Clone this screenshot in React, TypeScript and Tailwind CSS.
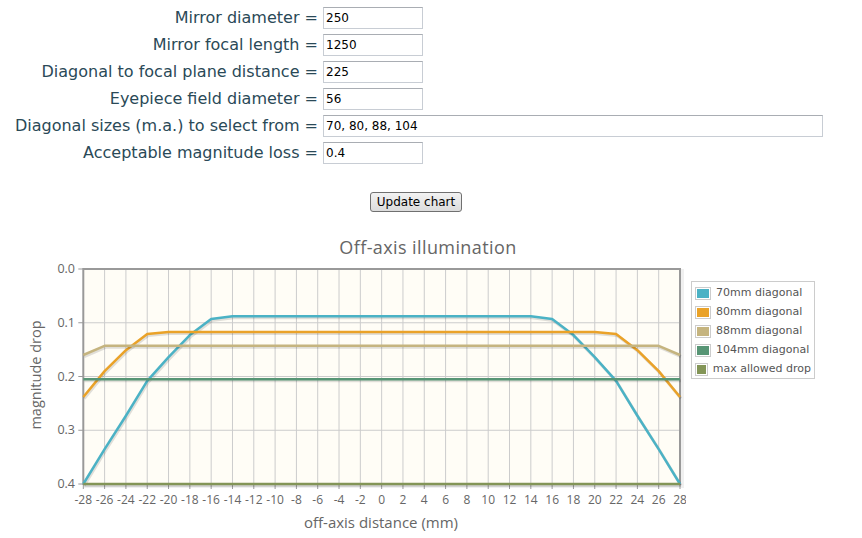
import React from 'react';

const fields = [
  { label: 'Mirror diameter', value: '250', wide: false },
  { label: 'Mirror focal length', value: '1250', wide: false },
  { label: 'Diagonal to focal plane distance', value: '225', wide: false },
  { label: 'Eyepiece field diameter', value: '56', wide: false },
  { label: 'Diagonal sizes (m.a.) to select from', value: '70, 80, 88, 104', wide: true },
  { label: 'Acceptable magnitude loss', value: '0.4', wide: false },
];

// x positions -28..28 step 2
const xs = Array.from({ length: 29 }, (_, i) => -28 + i * 2);

const flat = (v: number) => xs.map(() => v);
const mirror = (edge: number[], mid: number) => {
  // edge = values from -28 inward
  const out = xs.map(() => mid);
  edge.forEach((v, i) => {
    out[i] = v;
    out[28 - i] = v;
  });
  return out;
};

const series = [
  { name: '70mm diagonal', color: '#4bb2c5', data: mirror([0.4, 0.335, 0.273, 0.208, 0.164, 0.123, 0.093], 0.088) },
  { name: '80mm diagonal', color: '#eaa228', data: mirror([0.238, 0.19, 0.151, 0.121], 0.117) },
  { name: '88mm diagonal', color: '#c5b47f', data: mirror([0.16], 0.143) },
  { name: '104mm diagonal', color: '#579575', data: flat(0.205) },
  { name: 'max allowed drop', color: '#839557', data: flat(0.4) },
];

// plot box in svg coords
const L = 83.3;
const R = 680;
const T = 11;
const B = 226;
const px = (x: number) => L + ((x + 28) / 56) * (R - L);
const py = (y: number) => T + (y / 0.4) * (B - T);

const Chart: React.FC = () => {
  return (
    <svg width={686} height={279} className="block shrink-0">
      {/* grid shadow */}
      <rect x={L + 2} y={T + 2} width={R - L} height={B - T} fill="none" stroke="rgba(0,0,0,0.06)" strokeWidth={4} />
      <rect x={L} y={T} width={R - L} height={B - T} fill="#fffdf6" />
      {xs.slice(1, -1).map((x) => (
        <line key={x} x1={px(x)} x2={px(x)} y1={T} y2={B} stroke="#cccccc" strokeWidth={1} />
      ))}
      {[0.1, 0.2, 0.3].map((y) => (
        <line key={y} x1={L} x2={R} y1={py(y)} y2={py(y)} stroke="#cccccc" strokeWidth={1} />
      ))}
      <rect x={L} y={T} width={R - L} height={B - T} fill="none" stroke="#999999" strokeWidth={2} />

      {/* ticks */}
      {xs.map((x) => (
        <g key={x}>
          <line x1={px(x)} x2={px(x)} y1={B} y2={B + 5} stroke="#999999" strokeWidth={1} />
          <text x={px(x)} y={246} textAnchor="middle" fontSize={12} fill="#666666">
            {x}
          </text>
        </g>
      ))}
      {[0, 0.1, 0.2, 0.3, 0.4].map((y) => (
        <g key={y}>
          <line x1={L - 5} x2={L} y1={py(y)} y2={py(y)} stroke="#999999" strokeWidth={1} />
          <text x={75} y={py(y) + 4} textAnchor="end" fontSize={12.5} fill="#666666">
            {y.toFixed(1)}
          </text>
        </g>
      ))}

      {/* series */}
      {series.map((s) => {
        const pts = s.data.map((v, i) => `${px(xs[i])},${py(v)}`).join(' ');
        const sh = s.data.map((v, i) => `${px(xs[i]) + 1},${py(v) + 1.5}`).join(' ');
        return (
          <g key={s.name}>
            <polyline points={sh} fill="none" stroke="rgba(0,0,0,0.12)" strokeWidth={3} strokeLinejoin="round" />
            <polyline points={pts} fill="none" stroke={s.color} strokeWidth={2.5} strokeLinejoin="round" />
          </g>
        );
      })}

      <text x={36} y={117} textAnchor="middle" fontSize={14.5} fill="#666666" transform="rotate(-90 36 117)" dy={5}>
        magnitude drop
      </text>
      <text x={381} y={270} textAnchor="middle" fontSize={15} fill="#666666">
        off-axis distance (mm)
      </text>
    </svg>
  );
};

export default function App() {
  return (
    <div className="w-[862px] h-[538px] bg-white overflow-hidden font-['DejaVu_Sans',sans-serif]">
      <div className="grid grid-cols-[318px_auto] auto-rows-[22px] gap-x-[5px] gap-y-[5px] pt-[7px]">
        {fields.map((f) => (
          <React.Fragment key={f.label}>
            <div className="flex items-center justify-end text-[16px] leading-none text-[#2a4957] whitespace-nowrap">
              {f.label}&nbsp;=
            </div>
            <input
              readOnly
              value={f.value}
              className={`${f.wide ? 'w-[500px]' : 'w-[100px]'} block h-[22px] px-[2px] border border-[#c8cdd4] border-t-[#a9adb3] text-[12px] text-black font-['DejaVu_Sans',sans-serif] outline-none`}
            />
          </React.Fragment>
        ))}
      </div>

      <div className="pl-[370px] pt-[28px] h-[48px]">
        <button className="block w-[92px] h-[20px] rounded-[3px] border border-[#707070] bg-gradient-to-b from-[#f2f2f2] to-[#dcdcdc] text-[12px] leading-none text-black font-['DejaVu_Sans',sans-serif]">
          Update chart
        </button>
      </div>

      <div className="mt-[24px] text-center w-[856px] h-[22px] leading-[22px] text-[18px] tracking-[0.4px] text-[#666666] font-['Open_Sans',sans-serif]">
        Off-axis illumination
      </div>

      <div className="flex font-['Open_Sans',sans-serif]">
        <Chart />
        <div className="mt-[23px] ml-[5px] w-[124px] h-[98px] border border-[#cccccc] bg-white px-[3px] pt-[3px] flex flex-col gap-[3px]">
          {series.map((s) => (
            <div key={s.name} className="flex items-center h-[16px] gap-[5px]">
              <div className="w-[16px] h-[13px] border border-[#cccccc] p-[1px] flex">
                <div className="flex-1" style={{ backgroundColor: s.color }} />
              </div>
              <span className="text-[11px] text-[#555555] font-['DejaVu_Sans',sans-serif] whitespace-nowrap">{s.name}</span>
            </div>
          ))}
        </div>
      </div>
    </div>
  );
}
